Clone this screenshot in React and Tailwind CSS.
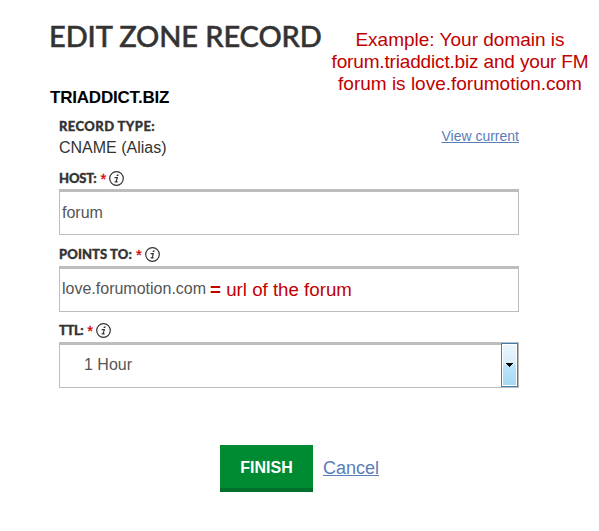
const arial = "font-['Liberation_Sans',Arial,sans-serif]";
const lato = "font-['Lato',sans-serif]";

function InfoIcon() {
  return (
    <svg className="ml-[3px] block h-[15px] w-[15px] shrink-0" viewBox="0 0 15 15" fill="none" aria-hidden="true">
      <circle cx="7.5" cy="7.5" r="6.8" stroke="#333" strokeWidth="1.2" />
      <path d="M7.9 3.4h1.8l-.4 1.7H7.5z" fill="#333" />
      <path d="M5.6 6.6h2.7L7.2 10.7M5.6 10.8h3" stroke="#333" strokeWidth="1.2" />
    </svg>
  );
}

function FieldLabel({ className, children }) {
  return (
    <div className="flex h-[23px] items-center">
      <span className={`${lato} text-[13px] leading-none font-black whitespace-nowrap text-[#333] [-webkit-text-stroke:0.35px_#333] ${className}`}>
        {children}
      </span>
      <span className={`${arial} ml-1 text-[15px] leading-none text-[#d00000] [-webkit-text-stroke:0.3px_#d00000]`}>*</span>
      <InfoIcon />
    </div>
  );
}

const box = "flex h-[46px] w-[460px] items-center border border-t-[3px] border-[#bdbdbd]";

export default function App() {
  return (
    <div className={`${arial} h-[531px] w-[599px] overflow-hidden bg-white`}>
      <header className="flex h-[119px] pl-[50px]">
        <div className="w-[281px] pt-[20px]">
          <h1 className={`${lato} -ml-px text-[29px] leading-[32px] font-medium tracking-[-0.1px] whitespace-nowrap text-[#333] [-webkit-text-stroke:0.5px_#333]`}>
            EDIT ZONE RECORD
          </h1>
          <h2 className="mt-[35px] text-[17px] leading-[22px] font-bold tracking-[-0.2px] whitespace-nowrap text-black">
            TRIADDICT.BIZ
          </h2>
        </div>
        <p className="w-[258px] pt-[29px] text-center text-[19px] leading-[22px] whitespace-nowrap text-[#c00000]">
          Example: Your domain is
          <br />
          <span className="tracking-[-0.16px]">forum.triaddict.biz and your FM</span>
          <br />
          forum is love.forumotion.com
        </p>
      </header>
      <main className="ml-[59px] w-[460px]">
        <section className="flex h-[48px] justify-between">
          <div>
            <div className={`${lato} h-[18px] text-[13px] leading-[15px] font-black tracking-[0.42px] whitespace-nowrap text-[#333] [-webkit-text-stroke:0.35px_#333]`}>
              RECORD TYPE:
            </div>
            <div className="text-[16px] leading-[22px] text-[#333]">CNAME (Alias)</div>
          </div>
          <a className="pt-[7px] text-[14px] leading-5 text-[#5a7db8] underline">View current</a>
        </section>
        <div className="-mb-px">
          <FieldLabel className="tracking-[-0.15px]">HOST:</FieldLabel>
        </div>
        <div className={`${box} pl-[2px] text-[16px] text-[#555]`}>forum</div>
        <div className="h-[8px]" />
        <FieldLabel className="tracking-[0.1px]">POINTS TO:</FieldLabel>
        <div className={`${box} pb-[2px] pl-[2px] text-[16px] text-[#555]`}>
          love.forumotion.com
          <span className="mt-[2px] ml-1 text-[18.7px] whitespace-nowrap text-[#c00000]">
            <b>=</b> url of the forum
          </span>
        </div>
        <div className="h-[7px]" />
        <FieldLabel className="tracking-[-0.4px]">TTL:</FieldLabel>
        <div className={`${box} relative justify-between pb-[2px] pl-[24px] text-[16px] text-[#555]`}>
          1 Hour
          <div className="absolute -top-[2px] right-0 flex h-[44px] w-[17px] items-center justify-center border border-[#3c7fb1] bg-white p-px">
            <div className="flex h-full w-full items-center justify-center bg-[linear-gradient(to_bottom,#e9f6fd_0%,#d6eefb_50%,#bce4fa_50%,#a6d9f4_100%)]">
              <svg className="h-1 w-[7px]" viewBox="0 0 7 4" shapeRendering="crispEdges">
                <path d="M0 0h7v1H6v1H5v1H4v1H3V3H2V2H1V1H0z" fill="#000" />
              </svg>
            </div>
          </div>
        </div>
      </main>
      <footer className="mt-[57px] ml-[220px] flex items-center">
        <button className="h-[47px] w-[93px] border-b-4 border-[#00702a] bg-[#008a32] pt-[2px] text-[16px] font-bold text-white">
          FINISH
        </button>
        <a className="mb-[2px] ml-[10px] text-[18px] leading-none text-[#5a7db8] underline">Cancel</a>
      </footer>
    </div>
  );
}
